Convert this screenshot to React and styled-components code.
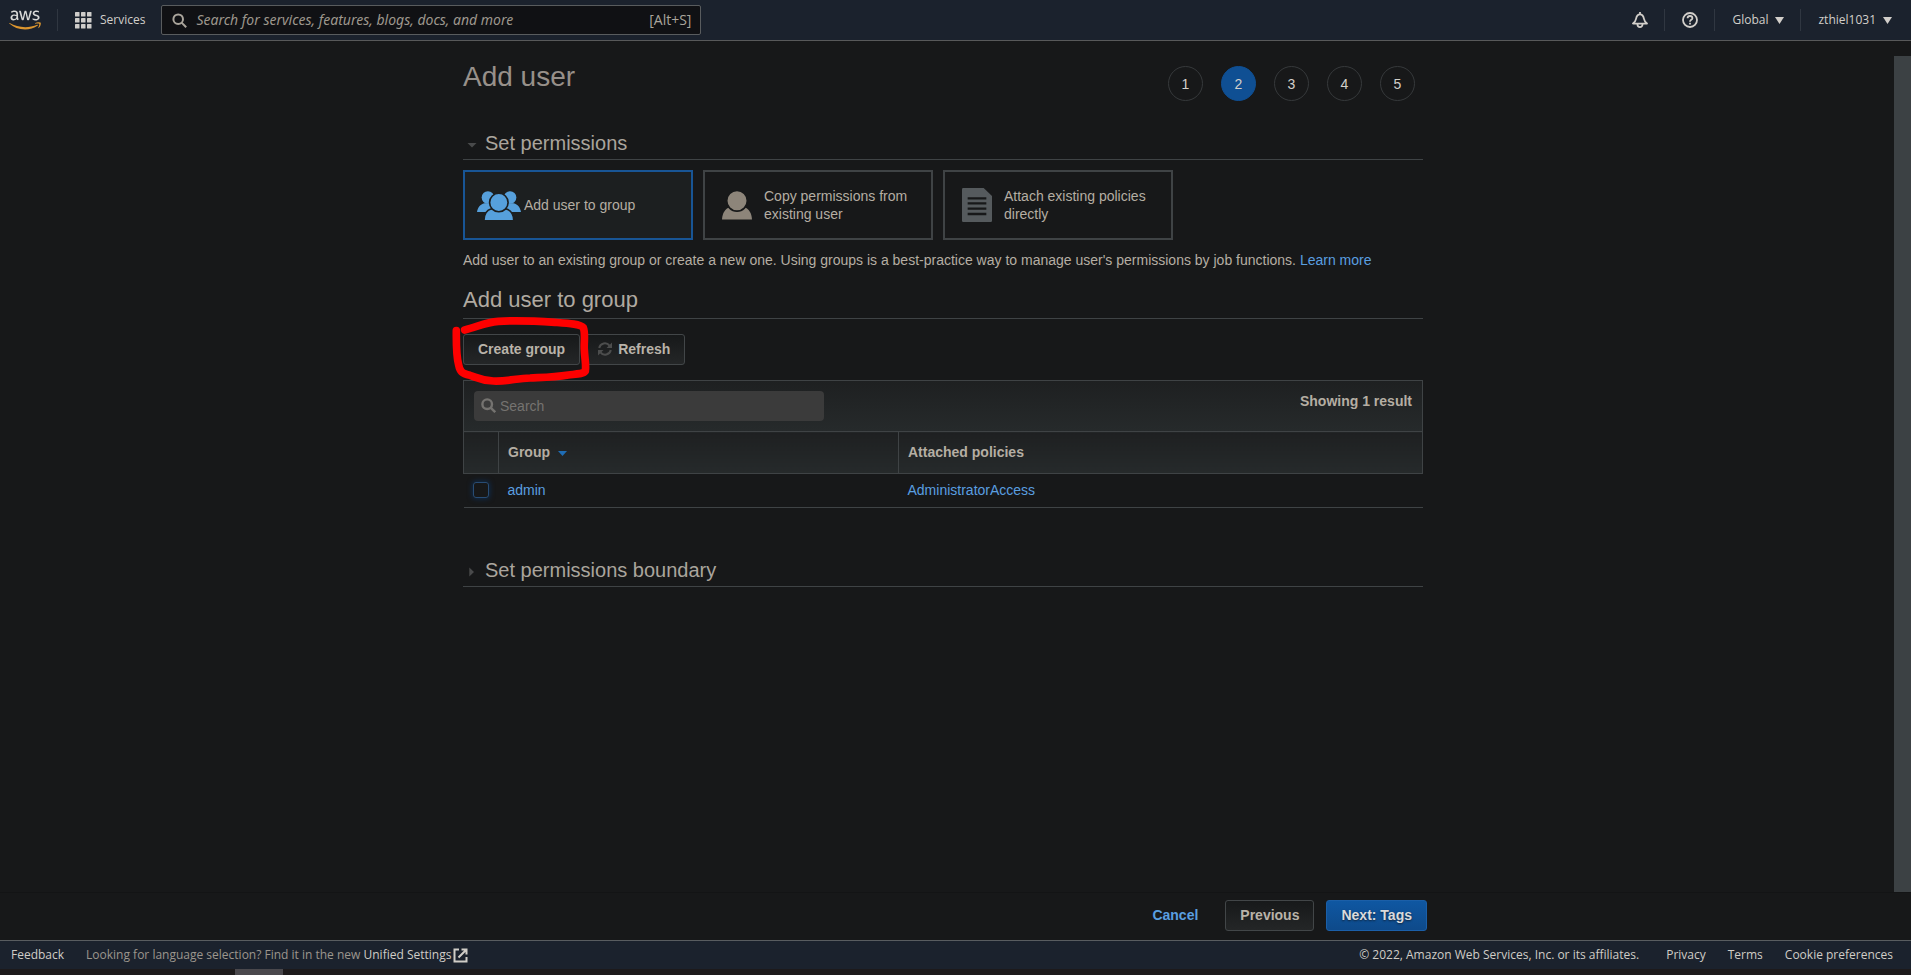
import React from "react";
import styled, { createGlobalStyle, css } from "styled-components";

const ember = `"Open Sans", "Noto Sans", sans-serif`;
const emberWide = `"Noto Sans", "Open Sans", sans-serif`;
const arial = `"Liberation Sans", Arial, sans-serif`;
const line = "#3f4345";

const GlobalStyle = createGlobalStyle`
  *, *::before, *::after { box-sizing: border-box; }
  body { margin: 0; background: #171819; color: #b5aea3; font: 14px/18px ${arial}; }
  a { color: #5a9fe0; text-decoration: none; }
  h1, h2, p { margin: 0; font-weight: 400; }
  button { font-family: inherit; cursor: pointer; }
`;

const Page = styled.div`
  display: flex;
  flex-direction: column;
  min-height: 100vh;
`;

/* ---------- top navigation ---------- */
const TopNav = styled.header`
  display: flex;
  align-items: center;
  justify-content: space-between;
  height: 41px;
  padding: 0 19px 0 9px;
  background: #1b222d;
  border-bottom: 1px solid #58595a;
  font: 12px/18px ${ember};
  color: #d2cfca;
`;

const NavGroup = styled.div`
  display: flex;
  align-items: center;
`;

const NavDivider = styled.span`
  width: 1px;
  height: 22px;
  margin: 0 17px 0 16px;
  background: #303741;
`;

const NavButton = styled.button`
  display: flex;
  align-items: center;
  gap: ${(p) => p.$gap || 7}px;
  padding: 0;
  border: 0;
  background: none;
  color: inherit;
  font: 500 12px/18px ${ember};
`;

const LogoLink = styled.a`
  display: flex;
  color: #d8d8d6;
`;

const GlobalSearch = styled.label`
  display: flex;
  align-items: center;
  width: 540px;
  height: 30px;
  margin-left: 16px;
  padding: 0 9px 0 10px;
  gap: 9px;
  background: #101114;
  border: 1px solid #595c5e;
  border-radius: 2px;
  color: #aaa59c;
  font: 14px/18px ${ember};
`;

const GlobalInput = styled.input`
  flex: 1;
  min-width: 0;
  padding: 0;
  border: 0;
  outline: 0;
  background: none;
  color: inherit;
  font: italic 14px/20px ${emberWide};
  &::placeholder { color: #9d978d; opacity: 1; }
`;

/* ---------- page body ---------- */
const Body = styled.div`
  display: flex;
  flex: 1;
`;

const Main = styled.main`
  flex: 1;
  min-width: 0;
  padding: 18px 8px 24px 0;
`;

const Content = styled.div`
  max-width: 960px;
  margin: 0 auto;
`;

const ScrollTrack = styled.div`
  display: flex;
  width: 17px;
  padding-top: 15px;
`;

const ScrollThumb = styled.div`
  flex: 1;
  background: #3c4144;
`;

const TitleRow = styled.div`
  display: flex;
  justify-content: space-between;
  height: 42px;
`;

const Title = styled.h1`
  font-size: 28px;
  line-height: 36px;
  color: #97908a;
`;

const Steps = styled.ol`
  display: flex;
  align-items: flex-end;
  gap: 18px;
  margin: 0;
  padding: 0 8px 0 0;
  list-style: none;
`;

const Step = styled.li`
  display: grid;
  place-items: center;
  width: 35px;
  height: 35px;
  border: 1px solid ${(p) => (p.$active ? "#0f4f93" : "#36393b")};
  border-radius: 50%;
  background: ${(p) => (p.$active ? "#0f4f93" : "transparent")};
  color: #d3d0cb;
`;

const SectionHeading = styled.h2`
  display: flex;
  align-items: center;
  margin-top: ${(p) => p.$top}px;
  padding: 0 0 4px 3px;
  border-bottom: 1px solid ${line};
  font-size: 20px;
  line-height: 24px;
  color: #aaa59d;
`;

const Disclosure = styled.button`
  display: flex;
  align-items: center;
  gap: 4px;
  padding: 0;
  border: 0;
  background: none;
  color: inherit;
  font-size: inherit;
  line-height: inherit;
  svg { margin-top: 4px; }
`;

const SubHeading = styled.h2`
  margin-top: 18px;
  padding-bottom: 5px;
  border-bottom: 1px solid ${line};
  font-size: 22px;
  line-height: 26px;
  color: #b0aaa1;
`;

const Cards = styled.div`
  display: flex;
  flex-wrap: wrap;
  gap: 10px;
  margin-top: 10px;
`;

const Card = styled.button`
  display: flex;
  align-items: center;
  gap: ${(p) => (p.$active ? 3 : 12)}px;
  width: 230px;
  height: 70px;
  padding: 0 ${(p) => (p.$active ? 12 : 17)}px;
  border: 2px solid ${(p) => (p.$active ? "#185595" : line)};
  background: ${(p) => (p.$active ? "#1c1f20" : "transparent")};
  color: #b5aea3;
  font-size: 14px;
  line-height: 18px;
  text-align: left;
  svg { flex: none; }
`;

const Intro = styled.p`
  margin-top: 11px;
`;

const ButtonRow = styled.div`
  position: relative;
  display: flex;
  gap: 3px;
  margin-top: 15px;
`;

const Marker = styled.svg`
  position: absolute;
  left: -13px;
  top: -19px;
  width: 142px;
  height: 73px;
  pointer-events: none;
`;

const Button = styled.button`
  display: flex;
  align-items: center;
  gap: 6px;
  height: 31px;
  padding: 0 14px 2px;
  border: 1px solid #424648;
  border-radius: 3px;
  background: linear-gradient(#17191a, #242627);
  color: #b9b3a9;
  font-size: 14px;
  font-weight: 700;
  line-height: 18px;
  ${(p) => p.$primary && css`
    border-color: #1b5fa8;
    background: linear-gradient(#0f57a2, #0e4a8a);
    color: #d9dbdd;
    text-shadow: 0 1px 2px #10233a;
  `}
`;

/* ---------- table ---------- */
const TableBar = styled.div`
  display: flex;
  justify-content: space-between;
  margin-top: 15px;
  padding: 10px;
  border: 1px solid ${line};
  border-bottom: 0;
  background: linear-gradient(#1e2021, #262a2b);
`;

const TableSearch = styled.label`
  display: flex;
  align-items: center;
  gap: 4px;
  width: 350px;
  height: 30px;
  padding: 0 7px;
  border-radius: 4px;
  background: #3b3b3b;
  color: #757370;
  svg { margin-bottom: 2px; }
`;

const TableInput = styled.input`
  flex: 1;
  min-width: 0;
  padding: 0;
  border: 0;
  outline: 0;
  background: none;
  color: inherit;
  font: 14px/18px ${arial};
  &::placeholder { color: #757370; opacity: 1; }
`;

const ResultCount = styled.strong`
  line-height: 18px;
  padding-top: 1px;
`;

const Table = styled.table`
  width: 100%;
  table-layout: fixed;
  border-collapse: collapse;
`;

const Th = styled.th`
  width: ${(p) => p.$width || "auto"};
  height: 42px;
  padding: 0 9px 2px;
  border: 1px solid ${line};
  background: linear-gradient(#1e2021, #262a2b);
  text-align: left;
  svg { margin-left: 8px; vertical-align: 1px; }
`;

const Td = styled.td`
  height: 34px;
  padding: 0 9px 2px;
  border-bottom: 1px solid ${line};
`;

const Check = styled.input`
  appearance: none;
  display: block;
  width: 16px;
  height: 16px;
  margin: 0;
  border: 1px solid #284c74;
  border-radius: 3px;
  box-shadow: 0 0 5px 1px #102b4b;
`;

/* ---------- bottom ---------- */
const ActionBar = styled.div`
  padding: 7px 25px 9px 0;
  border-top: 1px solid #131415;
`;

const Actions = styled.div`
  display: flex;
  align-items: center;
  justify-content: flex-end;
  gap: 12px;
  max-width: 968px;
  margin: 0 auto;
`;

const CancelLink = styled.a`
  margin-right: 15px;
  padding-bottom: 2px;
  font-weight: 700;
`;

const Footer = styled.footer`
  display: flex;
  align-items: center;
  justify-content: space-between;
  height: 29px;
  padding: 0 18px 0 11px;
  border-top: 1px solid #595d60;
  background: #1b222d;
  color: #9c968d;
  font: 12px/18px ${ember};
  a { color: #d0cdc7; }
`;

const FooterGroup = styled.div`
  display: flex;
  align-items: center;
  gap: 22px;
`;

const Copyright = styled.span`
  margin-right: 5px;
  color: #d0cdc7;
`;

const SettingsLink = styled.a`
  display: inline-flex;
  align-items: center;
  gap: 2px;
  font-weight: 500;
`;

const BottomTrack = styled.div`
  height: 6px;
  padding-left: 235px;
  background: #1d1a1b;
`;

const BottomThumb = styled.div`
  width: 48px;
  height: 6px;
  background: #4a484c;
`;

/* ---------- drawings ---------- */
const AwsLogo = () => (
  <svg width="32" height="22" viewBox="0 0 304 182" aria-label="AWS">
    <path fill="currentColor" d="M86.4 66.4c0 3.7.4 6.7 1.1 8.9.8 2.2 1.8 4.6 3.2 7.2.5.8.7 1.6.7 2.3 0 1-.6 2-1.9 3l-6.3 4.2c-.9.6-1.8.9-2.6.9-1 0-2-.5-3-1.4-1.4-1.5-2.6-3.1-3.6-4.7-1-1.7-2-3.6-3.1-5.9-7.8 9.2-17.6 13.8-29.4 13.8-8.4 0-15.1-2.4-20-7.2-4.900-4.800-7.400-11.200-7.400-19.200 0-8.500 3-15.400 9.100-20.600 6.100-5.200 14.200-7.800 24.500-7.800 3.400 0 6.900.3 10.600.8 3.700.5 7.500 1.300 11.500 2.200v-7.300c0-7.600-1.600-12.900-4.700-16-3.200-3.100-8.600-4.600-16.300-4.600-3.500 0-7.100.4-10.800 1.300-3.700.9-7.300 2-10.800 3.400-1.600.7-2.800 1.100-3.500 1.300-.7.200-1.200.3-1.600.3-1.400 0-2.100-1-2.100-3.100v-4.900c0-1.600.2-2.800.7-3.500.5-.7 1.400-1.400 2.800-2.100 3.500-1.800 7.700-3.300 12.600-4.500 4.900-1.300 10.100-1.900 15.600-1.900 11.900 0 20.600 2.700 26.200 8.100 5.500 5.400 8.300 13.600 8.300 24.600v32.400zM45.800 81.600c3.300 0 6.700-.6 10.300-1.800 3.600-1.200 6.800-3.400 9.500-6.400 1.600-1.900 2.800-4 3.400-6.400.6-2.400 1-5.300 1-8.700v-4.200c-2.900-.7-6-1.300-9.200-1.700-3.200-.4-6.300-.6-9.400-.6-6.700 0-11.600 1.300-14.900 4-3.300 2.700-4.900 6.500-4.900 11.500 0 4.700 1.200 8.200 3.700 10.600 2.400 2.500 5.900 3.700 10.500 3.700zM126.100 92.400c-1.800 0-3-.3-3.800-1-.8-.6-1.500-2-2.100-3.900L96.700 10.200c-.6-2-.9-3.300-.9-4 0-1.600.8-2.500 2.400-2.500h9.800c1.900 0 3.200.3 3.900 1 .8.600 1.400 2 2 3.900l16.800 66.200 15.600-66.200c.5-2 1.100-3.300 1.900-3.900.8-.6 2.200-1 4-1h8c1.900 0 3.200.3 4 1 .8.600 1.500 2 1.900 3.900l15.800 67 17.300-67c.6-2 1.300-3.300 2-3.900.8-.6 2.100-1 3.900-1h9.300c1.600 0 2.500.8 2.500 2.500 0 .5-.1 1-.2 1.600-.1.600-.3 1.400-.7 2.500l-24.100 77.300c-.6 2-1.300 3.300-2.100 3.900-.8.600-2.100 1-3.800 1h-8.600c-1.900 0-3.200-.3-4-1-.8-.7-1.500-2-1.900-4L156 23l-15.400 64.400c-.5 2-1.100 3.300-1.900 4-.8.700-2.200 1-4 1h-8.600zM254.600 95.100c-5.200 0-10.400-.6-15.400-1.800-5-1.200-8.900-2.500-11.500-4-1.600-.9-2.700-1.900-3.100-2.800-.4-.9-.6-1.900-.6-2.800v-5.100c0-2.100.8-3.100 2.300-3.100.6 0 1.200.1 1.800.3.600.2 1.500.6 2.500 1 3.400 1.500 7.100 2.700 11 3.500 4 .8 7.900 1.200 11.900 1.200 6.300 0 11.200-1.100 14.600-3.300 3.400-2.200 5.200-5.400 5.200-9.500 0-2.800-.9-5.100-2.700-7-1.800-1.900-5.200-3.600-10.100-5.200L246 52c-7.300-2.300-12.700-5.700-16-10.200-3.300-4.400-5-9.300-5-14.500 0-4.200.9-7.900 2.700-11.100 1.800-3.200 4.200-6 7.200-8.200 3-2.300 6.400-4 10.400-5.200 4-1.200 8.200-1.700 12.600-1.700 2.200 0 4.500.1 6.700.4 2.300.3 4.400.7 6.500 1.100 2 .5 3.900 1 5.700 1.600 1.800.6 3.200 1.200 4.200 1.800 1.400.8 2.400 1.600 3 2.500.6.800.9 1.900.9 3.300v4.700c0 2.100-.8 3.200-2.300 3.200-.8 0-2.100-.4-3.800-1.200-5.700-2.600-12.100-3.900-19.200-3.900-5.700 0-10.200.9-13.300 2.800-3.100 1.900-4.700 4.800-4.700 8.900 0 2.800 1 5.200 3 7.100 2 1.900 5.700 3.800 11 5.500l14.200 4.500c7.200 2.300 12.400 5.500 15.500 9.600 3.100 4.100 4.600 8.800 4.600 14 0 4.300-.9 8.200-2.600 11.600-1.800 3.400-4.200 6.400-7.300 8.800-3.100 2.500-6.800 4.300-11.100 5.600-4.500 1.400-9.200 2.100-14.300 2.100z" />
    <g fill="#dc962f">
      <path d="M273.500 143.700c-32.900 24.300-80.700 37.200-121.800 37.200-57.600 0-109.500-21.300-148.700-56.700-3.100-2.800-.3-6.600 3.400-4.400 42.400 24.600 94.700 39.500 148.800 39.500 36.500 0 76.600-7.600 113.500-23.200 5.500-2.500 10.200 3.600 4.800 7.600z" />
      <path d="M287.200 128.100c-4.200-5.400-27.800-2.600-38.500-1.300-3.200.4-3.700-2.400-.8-4.500 18.800-13.200 49.700-9.400 53.300-5 3.600 4.500-1 35.400-18.600 50.200-2.700 2.300-5.300 1.100-4.100-1.900 4-9.900 12.900-32.200 8.700-37.500z" />
    </g>
  </svg>
);

const GridIcon = () => (
  <svg width="17" height="17" viewBox="0 0 17 17" fill="#cfcdca">
    {[0, 6, 12].map((y) => [0, 6, 12].map((x) => (
      <rect key={`${x}-${y}`} x={x} y={y} width="4.500" height="4.500" rx="0.600" />
    )))}
  </svg>
);

const SearchIcon = ({ size = 15, weight = 2 }) => (
  <svg width={size} height={size} viewBox="0 0 15 15" fill="none" stroke="currentColor" strokeWidth={weight}>
    <circle cx="6.200" cy="6.200" r="4.800" />
    <path d="M9.600 9.600l4.600 4.600" />
  </svg>
);

const BellIcon = () => (
  <svg width="16" height="16" viewBox="0 0 16 16" fill="none" stroke="currentColor" strokeWidth="1.800" strokeLinejoin="round">
    <path d="M8 0v2M1 11.600h14c-2-1.400-2.600-2.600-3.100-5C11.400 3.800 10.200 2.300 8 2.300S4.600 3.800 4.100 6.600C3.600 9 3 10.200 1 11.600z" />
    <path d="M5.500 12v.6a2.500 2.500 0 0 0 5 0V12" />
  </svg>
);

const HelpIcon = () => (
  <svg width="16" height="16" viewBox="0 0 16 16" fill="none" stroke="currentColor" strokeWidth="1.800">
    <circle cx="8" cy="8" r="7" />
    <path d="M5.600 6.300C5.600 4.900 6.600 4 8 4s2.400.9 2.400 2.200C10.400 7.800 8 7.900 8 9.700M8 10.800v1.700" />
  </svg>
);

const Triangle = ({ width = 9, height = 7, fill = "currentColor" }) => (
  <svg width={width} height={height} viewBox="0 0 10 10" preserveAspectRatio="none">
    <path d="M0 0h10L5 10z" fill={fill} />
  </svg>
);

const SectionArrow = ({ open }) => (
  <svg width="15" height="10" viewBox="0 0 15 10" fill="#494a4b">
    <path d={open ? "M1.500 3h9L6 7.500z" : "M3.300 0.500L8 5l-4.700 4.500z"} />
  </svg>
);

const GroupIcon = () => (
  <svg width="44" height="29" viewBox="0 0 133 86" fill="#56a0dc" stroke="#1c1f20">
    <g strokeWidth="0">
      <circle cx="33" cy="19" r="19" />
      <circle cx="100" cy="19" r="19" />
      <path d="M0 63c2-14 10-24 22-27h24v27zM133 63c-2-14-10-24-22-27H87v27z" />
    </g>
    <path strokeWidth="5" d="M21 89c0-19 9-32 23-36h43c14 4 24 17 24 36z" />
    <circle cx="66" cy="34" r="28" strokeWidth="5" />
  </svg>
);

const UserIcon = () => (
  <svg width="30" height="29" viewBox="0 0 90 86" fill="#8d857a" stroke="#171819">
    <path strokeWidth="0" d="M0 85c1-19 9-32 22-37h46c13 5 21 18 22 37z" />
    <circle cx="45" cy="29" r="31" strokeWidth="5" />
  </svg>
);

const PolicyIcon = () => (
  <svg width="30" height="34" viewBox="0 0 90 102">
    <path fill="#555a5d" d="M4 0h61l25 24v74q0 4-4 4H4q-4 0-4-4V4q0-4 4-4z" />
    <path stroke="#171819" strokeWidth="7" d="M17 31h56M17 46h56M17 62h56M17 78h56" />
  </svg>
);

const RefreshIcon = () => (
  <svg width="14" height="14" viewBox="0 0 14 14" fill="none" stroke="#4c4d4d" strokeWidth="2">
    <path d="M1.200 6A5.800 5.800 0 0 1 11.500 3.700M12.800 8A5.800 5.800 0 0 1 2.500 10.300" />
    <path fill="#4c4d4d" stroke="none" d="M14 0.500V6H8.500zM0 13.500V8h5.500z" />
  </svg>
);

const ExternalIcon = () => (
  <svg width="15" height="15" viewBox="0 0 15 15" fill="none" stroke="currentColor" strokeWidth="2">
    <path d="M6 1.500H1.500v12h12V9M8.500 1.500h5V6.500M13.500 1.500L5.500 9.500" />
  </svg>
);

const steps = [1, 2, 3, 4, 5];

export default function App() {
  return (
    <Page>
      <GlobalStyle />
      <TopNav>
        <NavGroup>
          <LogoLink href="#home"><AwsLogo /></LogoLink>
          <NavDivider />
          <NavButton $gap={8}><GridIcon />Services</NavButton>
          <GlobalSearch>
            <SearchIcon />
            <GlobalInput type="search" aria-label="Search services" placeholder="Search for services, features, blogs, docs, and more" />
            <span>[Alt+S]</span>
          </GlobalSearch>
        </NavGroup>
        <NavGroup>
          <NavButton aria-label="Notifications"><BellIcon /></NavButton>
          <NavDivider />
          <NavButton aria-label="Help"><HelpIcon /></NavButton>
          <NavDivider />
          <NavButton>Global<Triangle /></NavButton>
          <NavDivider />
          <NavButton>zthiel1031<Triangle /></NavButton>
        </NavGroup>
      </TopNav>

      <Body>
        <Main>
          <Content>
            <TitleRow>
              <Title>Add user</Title>
              <Steps>
                {steps.map((n) => <Step key={n} $active={n === 2}>{n}</Step>)}
              </Steps>
            </TitleRow>

            <SectionHeading $top={30}>
              <Disclosure aria-expanded="true"><SectionArrow open />Set permissions</Disclosure>
            </SectionHeading>
            <Cards>
              <Card $active><GroupIcon />Add user to group</Card>
              <Card><UserIcon />Copy permissions from existing user</Card>
              <Card><PolicyIcon />Attach existing policies directly</Card>
            </Cards>
            <Intro>
              Add user to an existing group or create a new one. Using groups is a best-practice way to manage user's permissions by job functions. <a href="#learn">Learn more</a>
            </Intro>

            <SubHeading>Add user to group</SubHeading>
            <ButtonRow>
              <Button>Create group</Button>
              <Button><RefreshIcon />Refresh</Button>
              <Marker viewBox="30 225 426 219" fill="none" stroke="#fe0000" strokeWidth="23" strokeLinecap="round" strokeLinejoin="round">
                <path d="M74 270C110 262 135 247 175 244C240 240 300 244 345 247C385 250 420 252 430 263C437 280 431 310 433 330C434 355 439 375 436 393C430 402 410 402 385 405C340 412 310 412 270 414C230 415 200 425 160 423C120 421 110 412 90 406C65 400 60 395 56 375C48 345 49 310 49 272" />
              </Marker>
            </ButtonRow>

            <TableBar>
              <TableSearch>
                <SearchIcon weight={2.4} />
                <TableInput type="search" aria-label="Search groups" placeholder="Search" />
              </TableSearch>
              <ResultCount>Showing 1 result</ResultCount>
            </TableBar>
            <Table>
              <thead>
                <tr>
                  <Th $width="35px" aria-label="Select" />
                  <Th $width="400px">Group<Triangle width={9} height={5} fill="#1f6db5" /></Th>
                  <Th>Attached policies</Th>
                </tr>
              </thead>
              <tbody>
                <tr>
                  <Td><Check type="checkbox" aria-label="Select admin" /></Td>
                  <Td><a href="#admin">admin</a></Td>
                  <Td><a href="#policy">AdministratorAccess</a></Td>
                </tr>
              </tbody>
            </Table>

            <SectionHeading $top={50}>
              <Disclosure aria-expanded="false"><SectionArrow />Set permissions boundary</Disclosure>
            </SectionHeading>
          </Content>
        </Main>
        <ScrollTrack><ScrollThumb /></ScrollTrack>
      </Body>

      <ActionBar>
        <Actions>
          <CancelLink href="#cancel">Cancel</CancelLink>
          <Button>Previous</Button>
          <Button $primary>Next: Tags</Button>
        </Actions>
      </ActionBar>
      <Footer>
        <FooterGroup>
          <a href="#feedback">Feedback</a>
          <span>
            Looking for language selection? Find it in the new{" "}
            <SettingsLink href="#settings">Unified Settings<ExternalIcon /></SettingsLink>
          </span>
        </FooterGroup>
        <FooterGroup>
          <Copyright>© 2022, Amazon Web Services, Inc. or its affiliates.</Copyright>
          <a href="#privacy">Privacy</a>
          <a href="#terms">Terms</a>
          <a href="#cookies">Cookie preferences</a>
        </FooterGroup>
      </Footer>
      <BottomTrack><BottomThumb /></BottomTrack>
    </Page>
  );
}
